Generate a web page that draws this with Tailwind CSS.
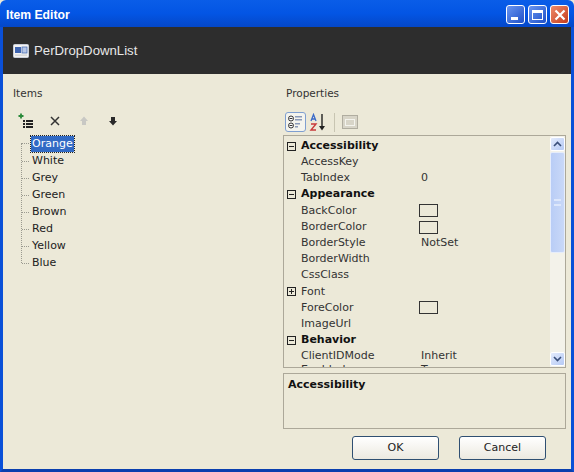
<!DOCTYPE html>
<html lang="en">
<head>
<meta charset="UTF-8">
<title>Item Editor</title>
<script src="https://cdn.jsdelivr.net/npm/@tailwindcss/browser@4"></script>
</head>
<body class="bg-[#ece9d8]">
<div class="w-[574px] h-[472px] flex flex-col overflow-hidden font-['DejaVu_Sans',sans-serif] text-[11px] text-[#222]">
  <!-- title bar -->
  <div class="h-[27px] shrink-0 flex items-center justify-between pl-[6px] pr-[5px] rounded-t-[6px] bg-gradient-to-b from-[#0a5de8] via-[#0355e4] to-[#0447c8]">
    <span class="font-['Liberation_Sans',sans-serif] font-bold text-[12.2px] text-white pt-[3px]">Item Editor</span>
    <div class="flex gap-[3px] mt-[2px]">
      <div class="w-[19px] h-[19px] rounded-[3px] border border-white bg-gradient-to-br from-[#6a95f0] to-[#1f4fc8] flex items-end pl-[4px] pb-[3px]"><div class="w-[7px] h-[3px] bg-white"></div></div>
      <div class="w-[19px] h-[19px] rounded-[3px] border border-white bg-gradient-to-br from-[#6a95f0] to-[#1f4fc8] flex items-center justify-center"><div class="w-[11px] h-[10px] border border-white border-t-[3px]"></div></div>
      <div class="w-[19px] h-[19px] rounded-[3px] border border-white bg-gradient-to-br from-[#ee8a68] to-[#c4391a] flex items-center justify-center">
        <svg width="12" height="12" viewBox="0 0 12 12"><path d="M1.5 1.5l9 9M10.5 1.5l-9 9" stroke="#fff" stroke-width="2.2"/></svg>
      </div>
    </div>
  </div>

  <div class="flex-1 min-h-0 flex flex-col border-x-[3px] border-b-[3px] border-x-[#0a50d8] border-b-[#0a3fae]">
    <!-- dark header -->
    <div class="h-[47px] shrink-0 bg-[#2d2d2d] flex items-center pl-[10px] gap-[5px]">
      <svg width="16" height="14" viewBox="0 0 16 14">
        <rect x="0.5" y="0.5" width="15" height="13" rx="1" fill="#f2f2f2" stroke="#c9ced8"/>
        <rect x="2" y="3" width="6" height="6" fill="#3e64b0"/>
        <rect x="9" y="3" width="5" height="6" fill="#b6c6e6" stroke="#3e64b0" stroke-width="0.7"/>
        <rect x="2" y="10.5" width="12" height="1.2" fill="#d0d0d0"/>
      </svg>
      <span class="font-['Liberation_Sans',sans-serif] text-[13.2px] text-[#e8e8e8]">PerDropDownList</span>
    </div>

    <div class="flex-1 min-h-0 flex bg-[#ece9d8] pr-[5px]">
      <!-- items column -->
      <div class="w-[280px] shrink-0 pl-[10px] pt-[12px]">
        <div class="h-[14px] leading-[14px] text-[#333] text-[10.5px]">Items</div>
        <div class="flex items-center h-[18px] mt-[12px] pl-[5px] gap-[13px]">
          <svg width="16" height="16" viewBox="0 0 16 16">
            <path d="M3 0.5v5M0.5 3h5" stroke="#2a8a3a" stroke-width="1.8"/>
            <path d="M5 7h2v2H5zM5 10h2v2H5zM5 13h2v2H5z" fill="#222"/>
            <path d="M8 7h7v2H8zM8 10h7v2H8zM8 13h7v2H8z" fill="#222"/>
          </svg>
          <svg width="16" height="16" viewBox="0 0 16 16"><path d="M4 4l8 8M12 4l-8 8" stroke="#333" stroke-width="1.5"/></svg>
          <svg width="16" height="16" viewBox="0 0 16 16"><path d="M8 3.5L12 8H10v4H6V8H4z" fill="#c8c8c4"/></svg>
          <svg width="16" height="16" viewBox="0 0 16 16"><path d="M8 12.5L12 8H10V4H6v4H4z" fill="#2a2a2a"/></svg>
        </div>
        <div class="relative mt-[5px] ml-[8px] pl-[1px] text-[#222]">
          <div class="absolute left-0 top-[8px] h-[120px] border-l border-dotted border-[#9a9a90]"></div>
          <div class="flex flex-col">
            <div class="h-[18px] pb-[1px] flex items-center"><span class="w-[7px] mr-[2px] border-t border-dotted border-[#9a9a90]"></span><span class="bg-[#316ac5] text-white px-[1px] outline-1 outline-dotted outline-[#222] leading-[16px]">Orange</span></div>
            <div class="h-[17px] flex items-center"><span class="w-[7px] mr-[3px] border-t border-dotted border-[#9a9a90]"></span>White</div>
            <div class="h-[17px] flex items-center"><span class="w-[7px] mr-[3px] border-t border-dotted border-[#9a9a90]"></span>Grey</div>
            <div class="h-[17px] flex items-center"><span class="w-[7px] mr-[3px] border-t border-dotted border-[#9a9a90]"></span>Green</div>
            <div class="h-[17px] flex items-center"><span class="w-[7px] mr-[3px] border-t border-dotted border-[#9a9a90]"></span>Brown</div>
            <div class="h-[17px] flex items-center"><span class="w-[7px] mr-[3px] border-t border-dotted border-[#9a9a90]"></span>Red</div>
            <div class="h-[17px] flex items-center"><span class="w-[7px] mr-[3px] border-t border-dotted border-[#9a9a90]"></span>Yellow</div>
            <div class="h-[17px] flex items-center"><span class="w-[7px] mr-[3px] border-t border-dotted border-[#9a9a90]"></span>Blue</div>
          </div>
        </div>
      </div>

      <!-- properties column -->
      <div class="flex-1 min-w-0 pt-[12px] flex flex-col">
        <div class="h-[14px] leading-[14px] text-[#333] text-[10.5px] pl-[3px]">Properties</div>
        <div class="flex items-center h-[20px] mt-[12px] pl-[2px] gap-[3px]">
          <div class="w-[21px] h-[20px] rounded-[3px] border border-[#7f9fd0] bg-[#f4f4ee] flex items-center justify-center">
            <svg width="16" height="14" viewBox="0 0 16 14">
              <circle cx="3" cy="3.5" r="2.5" fill="#fff" stroke="#333"/><path d="M1.5 3.5h3" stroke="#333"/>
              <circle cx="3" cy="10.5" r="2.5" fill="#fff" stroke="#333"/><path d="M1.5 10.5h3" stroke="#333"/>
              <path d="M7 1h7v1.5H7zM7 4h7v1.5H7zM7 8h5v1.5H7zM7 11h3v1.5H7z" fill="#8a9ab8"/>
            </svg>
          </div>
          <svg width="18" height="19" viewBox="0 0 18 19">
            <path d="M2 8l2.5-6.5L7 8M3 6h3" fill="none" stroke="#3a6ac8" stroke-width="1.3"/>
            <path d="M2 11h5l-5 6h5" fill="none" stroke="#c83a3a" stroke-width="1.4"/>
            <path d="M13 1v14" stroke="#222" stroke-width="1.4"/>
            <path d="M10 13l3 4.5 3-4.5z" fill="#222"/>
          </svg>
          <div class="w-px h-[19px] bg-[#c8c5b2] mx-[4px]"></div>
          <div class="w-[16px] h-[14px] border border-[#b0ada0] bg-[#d8d5c8] flex items-center justify-center">
            <div class="w-[10px] h-[7px] border border-[#f4f4ee]"></div>
          </div>
        </div>

        <!-- property grid -->
        <div class="mt-[3px] h-[233px] shrink-0 flex border border-[#aca899] overflow-hidden">
          <div class="flex-1 min-w-0 overflow-hidden pt-[2px] pl-[3px] text-[#333]">
            <div class="h-[16.2px] flex items-center"><span class="w-[9px] h-[9px] mr-[5px] border border-[#222] flex items-center justify-center"><span class="w-[5px] h-px bg-[#222]"></span></span><b class="font-bold text-[#111]">Accessibility</b></div>
            <div class="h-[16.2px] flex items-center pl-[14px]"><span class="w-[120px]">AccessKey</span></div>
            <div class="h-[16.2px] flex items-center pl-[14px]"><span class="w-[120px]">TabIndex</span><span>0</span></div>
            <div class="h-[16.2px] flex items-center"><span class="w-[9px] h-[9px] mr-[5px] border border-[#222] flex items-center justify-center"><span class="w-[5px] h-px bg-[#222]"></span></span><b class="font-bold text-[#111]">Appearance</b></div>
            <div class="h-[16.2px] flex items-center pl-[14px]"><span class="w-[118px]">BackColor</span><span class="w-[19px] h-[13px] border border-[#333]"></span></div>
            <div class="h-[16.2px] flex items-center pl-[14px]"><span class="w-[118px]">BorderColor</span><span class="w-[19px] h-[13px] border border-[#333]"></span></div>
            <div class="h-[16.2px] flex items-center pl-[14px]"><span class="w-[120px]">BorderStyle</span><span>NotSet</span></div>
            <div class="h-[16.2px] flex items-center pl-[14px]"><span class="w-[120px]">BorderWidth</span></div>
            <div class="h-[16.2px] flex items-center pl-[14px]"><span class="w-[120px]">CssClass</span></div>
            <div class="h-[16.2px] flex items-center"><span class="w-[9px] h-[9px] mr-[5px] border border-[#222] relative flex items-center justify-center"><span class="w-[5px] h-px bg-[#222]"></span><span class="absolute w-px h-[5px] bg-[#222]"></span></span><span>Font</span></div>
            <div class="h-[16.2px] flex items-center pl-[14px]"><span class="w-[118px]">ForeColor</span><span class="w-[19px] h-[13px] border border-[#333]"></span></div>
            <div class="h-[16.2px] flex items-center pl-[14px]"><span class="w-[120px]">ImageUrl</span></div>
            <div class="h-[16.2px] flex items-center"><span class="w-[9px] h-[9px] mr-[5px] border border-[#222] flex items-center justify-center"><span class="w-[5px] h-px bg-[#222]"></span></span><b class="font-bold text-[#111]">Behavior</b></div>
            <div class="h-[16.2px] flex items-center pl-[14px]"><span class="w-[120px]">ClientIDMode</span><span>Inherit</span></div>
            <div class="h-[16.2px] -mt-[2px] flex items-center pl-[14px]"><span class="w-[120px]">Enabled</span><span>True</span></div>
          </div>
          <!-- scrollbar -->
          <div class="w-[15px] shrink-0 flex flex-col py-[1px] bg-[#f3f2ea]">
            <div class="h-[14px] shrink-0 rounded-[2px] bg-gradient-to-br from-[#e3ebfc] to-[#b6caf5] border border-[#fff] flex items-center justify-center">
              <svg width="9" height="6" viewBox="0 0 9 6"><path d="M1 5l3.5-3.5L8 5" fill="none" stroke="#3a4f7a" stroke-width="1.6"/></svg>
            </div>
            <div class="h-[101px] shrink-0 mt-px rounded-[2px] bg-gradient-to-r from-[#b9cdf6] to-[#c9d8f8] border border-[#e6edfb] flex items-center justify-center">
              <div class="w-[7px] h-[7px] border-y-2 border-[#dde7fb]"></div>
            </div>
            <div class="flex-1"></div>
            <div class="h-[14px] shrink-0 rounded-[2px] bg-gradient-to-br from-[#e3ebfc] to-[#b6caf5] border border-[#fff] flex items-center justify-center">
              <svg width="9" height="6" viewBox="0 0 9 6"><path d="M1 1l3.5 3.5L8 1" fill="none" stroke="#3a4f7a" stroke-width="1.6"/></svg>
            </div>
          </div>
        </div>

        <!-- description -->
        <div class="mt-[5px] h-[56px] shrink-0 border border-[#aca899] pl-[4px] pt-[3px]">
          <b class="font-bold text-[#111]">Accessibility</b>
        </div>

        <!-- buttons -->
        <div class="mt-[7px] flex justify-end gap-[20px] pr-[20px]">
          <button class="w-[87px] h-[24px] rounded-[3px] border border-[#2f4f72] bg-gradient-to-b from-white to-[#ece9e0] text-[#222] text-[11px]">OK</button>
          <button class="w-[87px] h-[24px] rounded-[3px] border border-[#2f4f72] bg-gradient-to-b from-white to-[#ece9e0] text-[#222] text-[11px]">Cancel</button>
        </div>
      </div>
    </div>
  </div>
</div>
</body>
</html>
